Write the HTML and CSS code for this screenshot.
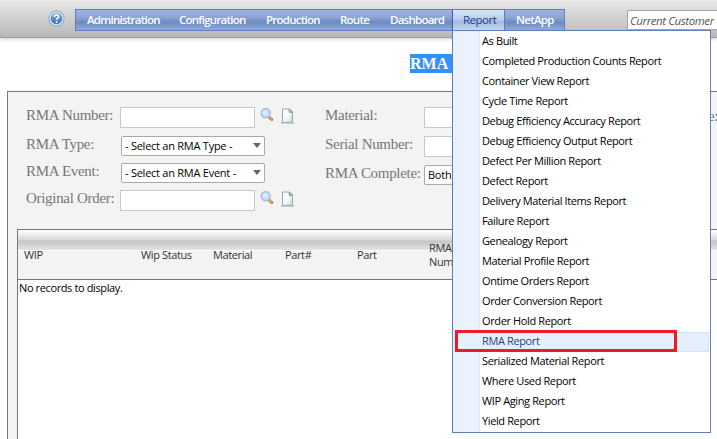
FILE: index.html
```html
<!DOCTYPE html>
<html lang="en">
<head>
<meta charset="utf-8">
<title>RMA Report</title>
<link rel="stylesheet" href="styles.css">
</head>
<body>
<svg class="defs" width="0" height="0">
  <defs>
    <linearGradient id="paper" x1="0" y1="0" x2="1" y2="1"><stop offset="0" stop-color="#fff"/><stop offset=".5" stop-color="#f4f9f8"/><stop offset="1" stop-color="#c4d9d8"/></linearGradient>
    <linearGradient id="ball" x1="0" y1="0" x2="0" y2="1"><stop offset="0" stop-color="#83abd6"/><stop offset="1" stop-color="#3a70ae"/></linearGradient>
    <symbol id="search" viewBox="0 0 14 14">
      <path d="M8.7 8.6 L11.8 11.5" stroke="#b9783a" stroke-width="3" stroke-linecap="round"/>
      <path d="M9.3 8.8 L11.8 11" stroke="#efb765" stroke-width="1.2" stroke-linecap="round"/>
      <circle cx="5.7" cy="5.2" r="4.5" fill="#c5defa" stroke="#a9bce4" stroke-width="1.5"/>
      <circle cx="5.2" cy="4.6" r="2.4" fill="#d8eaff"/>
    </symbol>
    <symbol id="page" viewBox="0 0 13 16">
      <path d="M1.5 1 H8.5 L11.5 4 V14.5 H1.5 Z" fill="url(#paper)" stroke="#91aaa8"/>
      <path d="M8.2 1 V4.4 H11.5 Z" fill="#b9cecc" stroke="#78918f" stroke-width=".8"/>
      <path d="M0 15 H13" stroke="#a5b5b4"/>
    </symbol>
  </defs>
</svg>
<header class="topbar">
  <svg class="help" viewBox="0 0 17 17"><circle cx="8.5" cy="8.5" r="7.6" fill="#dce9f5" stroke="#7c9fc6" stroke-width="1"/><circle cx="8.5" cy="8.5" r="5.8" fill="url(#ball)"/><path d="M6.4 7 C6.4 4.3 10.7 4.3 10.7 6.7 C10.7 8.2 8.6 8.1 8.6 9.8" fill="none" stroke="#fff" stroke-width="1.7"/><circle cx="8.6" cy="12" r="1.05" fill="#fff"/></svg>
  <nav class="nav">
    <a class="n1">Administration</a><a class="n2">Configuration</a><a class="n3">Production</a><a class="n4">Route</a><a class="n5">Dashboard</a>
    <a class="n6 open">Report</a><a class="n7">NetApp</a>
  </nav>
  <div class="customer">Current Customer</div>
</header>
<h1 class="title"><span>RMA</span></h1>
<main class="panel">
  <section class="form">
    <div class="col left">
      <div class="field r1"><label>RMA Number:</label><span class="input"></span><svg class="search"><use href="#search"/></svg><svg class="page"><use href="#page"/></svg></div>
      <div class="field r2"><label>RMA Type:</label><span class="select"><b>- Select an RMA Type -</b><i></i></span></div>
      <div class="field r3"><label>RMA Event:</label><span class="select"><b>- Select an RMA Event -</b><i></i></span></div>
      <div class="field r4"><label>Original Order:</label><span class="input"></span><svg class="search"><use href="#search"/></svg><svg class="page"><use href="#page"/></svg></div>
    </div>
    <div class="col mid">
      <div class="field r1"><label>Material:</label><span class="input"></span></div>
      <div class="field r2"><label>Serial Number:</label><span class="input"></span></div>
      <div class="field r3"><label>RMA Complete:</label><span class="select"><b>Both</b></span></div>
    </div>
    <div class="col far"><label>e:</label></div>
  </section>
  <section class="table">
    <div class="head"><span>WIP</span><span>Wip Status</span><span>Material</span><span>Part#</span><span>Part</span><span>RMA<br>Num</span></div>
    <p class="empty">No records to display.</p>
  </section>
</main>
<ul class="menu">
  <li>As Built</li><li>Completed Production Counts Report</li><li>Container View Report</li><li>Cycle Time Report</li><li>Debug Efficiency Accuracy Report</li><li>Debug Efficiency Output Report</li><li>Defect Per Million Report</li><li>Defect Report</li><li>Delivery Material Items Report</li><li>Failure Report</li><li>Genealogy Report</li><li>Material Profile Report</li><li>Ontime Orders Report</li><li>Order Conversion Report</li><li>Order Hold Report</li><li class="active">RMA Report</li><li>Serialized Material Report</li><li>Where Used Report</li><li>WIP Aging Report</li><li>Yield Report</li>
</ul>
<div class="marker"></div>
</body>
</html>
```
FILE: styles.css
```css
* { box-sizing: border-box; }
body { margin: 0; width: 717px; height: 439px; overflow: hidden; background: #fff; font: 11px/20px "Open Sans", sans-serif; letter-spacing: -.38px; color: #000; position: relative; }
.defs { position: absolute; }
.topbar { display: flex; align-items: flex-start; height: 38px; padding: 9px 0 0 48px; background: linear-gradient(#e8e8e8, #b8b8b8); border-bottom: 1px solid #9c9c9c; box-shadow: 0 1px 4px #ccc; }
.help { width: 17px; height: 17px; margin: 1px 10px 0 0; flex: none; }
.nav { display: flex; width: 490px; height: 22px; flex: none; border: 1px solid #5c80bf; background: linear-gradient(#a0b4dc 0, #8fa6d4 35%, #7d97cb 50%, #6b89c3 60%, #8eabdc 100%); color: #fff; font-size: 11.5px; font-weight: 600; letter-spacing: -.75px; line-height: 20px; }
.nav a { padding-left: 11px; white-space: nowrap; flex: none; }
.n1 { width: 92px; } .n2 { width: 87px; } .n3 { width: 74px; } .n4 { width: 50px; } .n5 { width: 73px; }
.n6 { width: 53px; } .n7 { width: 59px; }
.nav .open { padding-left: 10px; background: linear-gradient(#dbe5f5, #b9cbea 50%, #a2b9df 55%, #c0d5f4); border-left: 1px solid #3c61a4; border-right: 1px solid #5c80bf; color: #1d3f86; font-weight: 400; letter-spacing: -.5px; }
.customer { width: 90px; height: 20px; margin: 1px 0 0 62px; padding-left: 2px; flex: none; border: 1px solid #a5a5a5; border-right: 0; border-radius: 2px 0 0 2px; background: #fff; color: #555; font-style: italic; font-size: 11.5px; letter-spacing: -.42px; line-height: 20px; white-space: nowrap; }
.title { margin: 16px 0 0 410px; height: 19px; font: bold 16px/19px "Liberation Serif", serif; letter-spacing: 0; color: #fff; }
.title span { display: inline-block; padding-right: 8px; background: #3390ff; }
.panel { margin: 18px 0 0 7px; width: 710px; height: 360px; padding: 0 0 0 9px; border: 1px solid #777; border-right: 0; background: #f3f3f3; }
.form { display: flex; height: 137px; padding-top: 15px; }
.col { display: flex; flex-direction: column; flex: none; }
.left { width: 299px; padding-left: 9px; } .mid { width: 392px; padding-left: 9px; }
.field { display: flex; height: 29px; align-items: flex-start; }
.r2, .r3 { height: 27px; }
.mid .r2 { height: 29px; }
label { width: 94px; flex: none; font: 15px/17px "Liberation Serif", serif; letter-spacing: -.3px; color: #777; white-space: nowrap; }
.mid label { width: 99px; }
.far label { width: auto; padding-top: 1px; }
.input { width: 135px; height: 21px; flex: none; border: 1px solid #c8c8c8; background: #fff; }
.select { display: flex; justify-content: space-between; align-items: center; width: 144px; height: 20px; margin-left: 1px; padding: 0 3px; flex: none; border: 1px solid #a9a9a9; border-radius: 2px; background: #fff; letter-spacing: -.25px; }
.mid .select { margin-left: 0; }
.select b { font-weight: 400; white-space: nowrap; }
.select i { border: 4px solid transparent; border-top: 5px solid #666; border-bottom: 0; margin-bottom: 2px; }
.search { width: 14px; height: 14px; margin: 1px 0 0 5px; }
.page { width: 13px; height: 16px; margin: 1px 0 0 7px; }
.table { height: 230px; border: 1px solid #777; border-right: 0; background: #fff; }
.head { display: flex; align-items: center; height: 50px; padding-left: 6px; border-bottom: 1px solid #777; background: linear-gradient(#fff 0, #d8d8d8 10px, #c4c4c4 11px, #e4e4e4 20px, #fff 20px, #fff 21px, #f3f3f3 21px); color: #333; line-height: 14px; }
.head span { flex: none; }
.head span:nth-child(1) { width: 117px; } .head span:nth-child(2) { width: 72px; } .head span:nth-child(3) { width: 72px; } .head span:nth-child(4) { width: 72px; } .head span:nth-child(5) { width: 72px; }
.empty { margin: 0 0 0 1px; line-height: 15px; }
.menu { position: absolute; left: 452px; top: 30px; width: 259px; height: 403px; margin: 0; padding: 1px 1px 0; list-style: none; border: 1px solid #5c80b8; background: linear-gradient(90deg, #eaf2ff 26px, #d8e6fa 26px, #d8e6fa 27px, #fff 27px); }
.menu li { height: 20px; padding-left: 28px; line-height: 18px; white-space: nowrap; }
.menu .active { background: #e6effd; color: #1d3f86; box-shadow: inset 0 0 0 1px #d3e1f7; }
.marker { position: absolute; left: 455px; top: 330px; width: 222px; height: 22px; border: 3px solid #ed1c24; }
```
